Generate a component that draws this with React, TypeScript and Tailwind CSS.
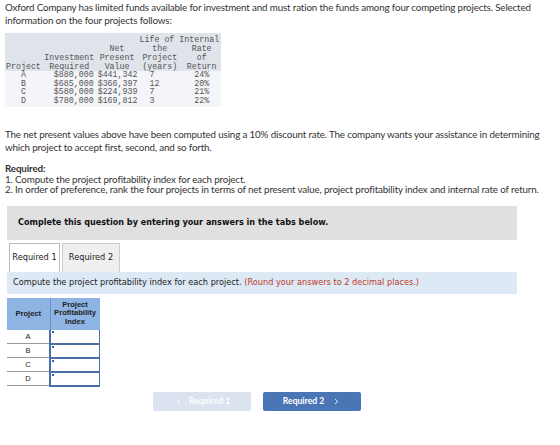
import React from "react";
import { ChevronLeft, ChevronRight } from "lucide-react";

const sans = { fontFamily: 'Lato, "Liberation Sans", Arial, sans-serif' };
const verdana = { fontFamily: '"DejaVu Sans", Verdana, sans-serif' };
const mono = { fontFamily: '"Liberation Mono", "Courier New", monospace' };

const projects = [
  { p: "A", inv: "$880,000", npv: "$441,342", life: "7", irr: "24%" },
  { p: "B", inv: "$685,000", npv: "$366,397", life: "12", irr: "20%" },
  { p: "C", inv: "$580,000", npv: "$224,939", life: "7", irr: "21%" },
  { p: "D", inv: "$780,000", npv: "$169,812", life: "3", irr: "22%" },
];

export default function App() {
  return (
    <div className="w-[560px] h-[445px] bg-white text-[#333] overflow-hidden" style={sans}>
      <div className="px-[5px] pt-[1px] text-[9.8px] leading-[13px] tracking-[-0.15px]">
        <p>
          Oxford Company has limited funds available for investment and must ration the funds among four competing projects. Selected
          information on the four projects follows:
        </p>

        <table
          className="mt-[6px] bg-[#dfe3ea] text-[#555] text-[8.3px] leading-[9px] border-collapse tracking-normal"
          style={mono}
        >
          <thead>
            <tr>
              <th className="font-normal px-[2.5px] pt-[2px]"></th>
              <th className="font-normal px-[2.5px]"></th>
              <th className="font-normal px-[2.5px]"></th>
              <th className="font-normal px-[2px] text-center pt-[2px]" colSpan={2}>
                Life of Internal
              </th>
            </tr>
            <tr>
              <th className="font-normal"></th>
              <th className="font-normal"></th>
              <th className="font-normal text-center">Net</th>
              <th className="font-normal text-center">the</th>
              <th className="font-normal text-center">Rate</th>
            </tr>
            <tr>
              <th className="font-normal"></th>
              <th className="font-normal text-center px-[2.5px]">Investment</th>
              <th className="font-normal text-center px-[2.5px]">Present</th>
              <th className="font-normal text-center px-[2.5px]">Project</th>
              <th className="font-normal text-center">of</th>
            </tr>
            <tr>
              <th className="font-normal text-center px-[1px]">Project</th>
              <th className="font-normal text-center">Required</th>
              <th className="font-normal text-center">Value</th>
              <th className="font-normal text-center">(years)</th>
              <th className="font-normal text-center px-[2.5px]">Return</th>
            </tr>
          </thead>
          <tbody className="bg-[#f3f5f8] leading-[8.5px]">
            {projects.map((r, i) => (
              <tr key={r.p} className={i === 3 ? "h-[10px] align-top" : "h-[8.5px]"}>
                <td className="text-center">{r.p}</td>
                <td className="text-right pr-[3px]">{r.inv}</td>
                <td className="text-left pl-[1px]">{r.npv}</td>
                <td className="text-left pl-[12px]">{r.life}</td>
                <td className="text-center">{r.irr}</td>
              </tr>
            ))}
          </tbody>
        </table>

        <p className="mt-[21px]">
          The net present values above have been computed using a 10% discount rate. The company wants your assistance in determining
          which project to accept first, second, and so forth.
        </p>

        <p className="mt-[9px] font-bold leading-[11px]">Required:</p>
        <p className="leading-[10px]">1. Compute the project profitability index for each project.</p>
        <p className="leading-[10px]">
          2. In order of preference, rank the four projects in terms of net present value, project profitability index and internal rate of return.
        </p>
      </div>

      <div className="mx-[7px] mt-[12px] w-[510px]">
        <div className="bg-[#e0e0e0] h-[34px] flex items-center pl-[11px] text-[8.1px] font-bold text-[#111]" style={verdana}>
          Complete this question by entering your answers in the tabs below.
        </div>

        <div className="flex mt-[3px] pl-[2px] gap-[2px] h-[29px]" style={verdana}>
          <div className="w-[51px] bg-white border border-[#bbb] border-b-0 flex items-center justify-center text-[8.2px] text-[#222]">
            Required 1
          </div>
          <div className="w-[58px] bg-[#efefef] border border-[#ccc] border-b-0 flex items-center justify-center text-[8.2px] text-[#222]">
            Required 2
          </div>
        </div>

        <div className="bg-[#dde9f5] h-[22px] flex items-center pl-[6px] text-[8.2px] text-[#222]" style={verdana}>
          Compute the project profitability index for each project.&nbsp;
          <span className="text-[#c0392b]">(Round your answers to 2 decimal places.)</span>
        </div>

        <table
          className="mt-[4px] border-collapse text-[7.6px] w-[93px]"
          style={{ fontFamily: '"Liberation Sans", Arial, sans-serif' }}
        >
          <thead>
            <tr className="bg-[#8eb4e3] h-[32px]">
              <th className="w-[43px] border-r border-[#6d8fbd] font-bold text-[#222]">Project</th>
              <th className="font-bold text-[#222] leading-[8.5px]">
                Project
                <br />
                Profitability
                <br />
                Index
              </th>
            </tr>
          </thead>
          <tbody>
            {["A", "B", "C", "D"].map((p) => (
              <tr key={p} className="h-[14px]">
                <td className="text-center text-[#222] border-b border-[#9a9a9a] border-r-2 border-r-[#4a6fa5]">{p}</td>
                <td className="p-0 border-b-2 border-[#4a6fa5] border-r border-r-[#4a6fa5] relative">
                  <span className="absolute left-[1px] top-[1px] w-[2px] h-[2px] bg-[#3060c0]" />
                  <div className="h-[12px] bg-white" />
                </td>
              </tr>
            ))}
          </tbody>
        </table>

        <div className="flex mt-[5px] ml-[146px] gap-[12px]">
          <div className="w-[98px] h-[19px] bg-[#dae3ef] rounded-[2px] flex items-center justify-center text-white text-[8.6px] font-bold gap-[6px]">
            <ChevronLeft size={9} strokeWidth={2.5} />
            <span>Required 1</span>
          </div>
          <div className="w-[98px] h-[19px] bg-[#4a76b5] rounded-[2px] flex items-center justify-center text-white text-[8.6px] font-bold gap-[8px]">
            <span>Required 2</span>
            <ChevronRight size={9} strokeWidth={2.5} />
          </div>
        </div>
      </div>
    </div>
  );
}
